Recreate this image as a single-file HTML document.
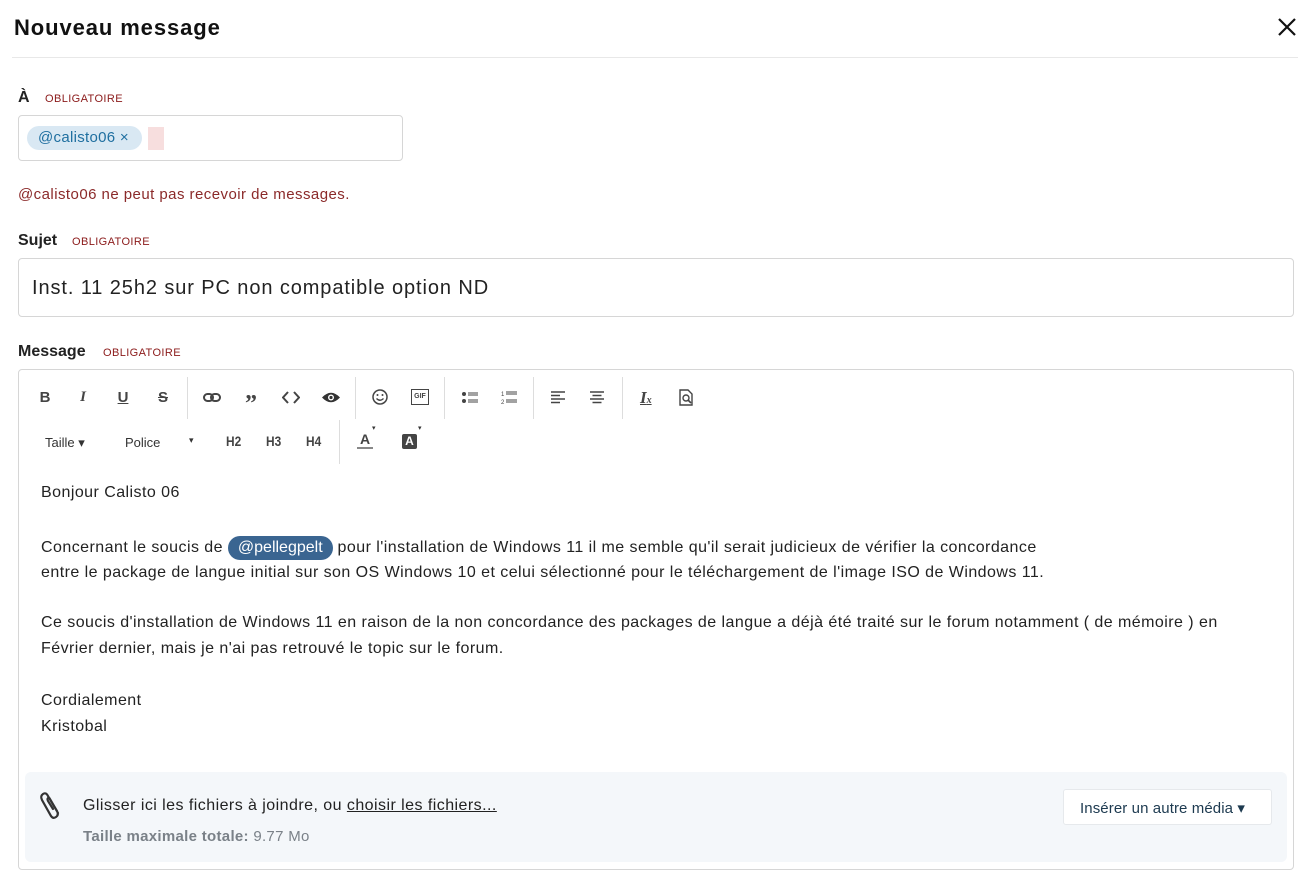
<!DOCTYPE html>
<html><head><meta charset="utf-8"><style>
*{box-sizing:border-box;margin:0;padding:0}
body{width:1307px;height:871px;background:#fff;font-family:"Liberation Sans",sans-serif;color:#141414;position:relative;overflow:hidden}
.a{position:absolute;white-space:nowrap}
.req{font-size:11px;color:#8b1a1a;letter-spacing:.4px}
.lbl{font-size:16px;font-weight:bold;color:#222}
.tb{position:absolute;font-size:15px;color:#444;font-weight:bold;text-align:center;width:30px}
.sep{position:absolute;width:1px;background:#ddd}
.txt{font-size:16px;color:#222;letter-spacing:.45px}
</style></head><body>
<div class="a" style="left:14px;top:15px;font-size:22px;font-weight:bold;color:#111;letter-spacing:.9px">Nouveau message</div>
<svg class="a" style="left:1278px;top:18px" width="18" height="18" viewBox="0 0 18 18"><path d="M1 1L17 17M17 1L1 17" stroke="#111" stroke-width="2.2"/></svg>
<div class="a" style="left:12px;top:57px;width:1286px;height:1px;background:#e8e8e8"></div>

<div class="a lbl" style="left:18px;top:89px">À</div>
<div class="a req" style="left:45px;top:93px">OBLIGATOIRE</div>
<div class="a" style="left:18px;top:115px;width:385px;height:46px;border:1px solid #d6d6d6;border-radius:4px"></div>
<div class="a" style="left:27px;top:126px;width:115px;height:24px;background:#d9e8f3;border-radius:12px;color:#1f6fa0;font-size:15px;padding:3px 0 0 11px;letter-spacing:.3px">@calisto06 ×</div>
<div class="a" style="left:148px;top:127px;width:16px;height:23px;background:#f7dede"></div>
<div class="a" style="left:18px;top:186px;font-size:15px;color:#8b2a2a;letter-spacing:.45px">@calisto06 ne peut pas recevoir de messages.</div>

<div class="a lbl" style="left:18px;top:232px">Sujet</div>
<div class="a req" style="left:72px;top:236px">OBLIGATOIRE</div>
<div class="a" style="left:18px;top:258px;width:1276px;height:59px;border:1px solid #d6d6d6;border-radius:4px"></div>
<div class="a" style="left:32px;top:277px;font-size:20px;color:#222;letter-spacing:.9px">Inst. 11 25h2 sur PC non compatible option ND</div>

<div class="a lbl" style="left:18px;top:343px">Message</div>
<div class="a req" style="left:103px;top:347px">OBLIGATOIRE</div>
<div class="a" style="left:18px;top:369px;width:1276px;height:501px;border:1px solid #d6d6d6;border-radius:4px"></div>

<div class="tb" style="left:30px;top:389px">B</div>
<div class="tb" style="left:68px;top:389px;font-style:italic;font-family:'Liberation Serif',serif">I</div>
<div class="tb" style="left:108px;top:389px;text-decoration:underline">U</div>
<div class="tb" style="left:148px;top:389px;text-decoration:line-through">S</div>
<div class="sep" style="left:187px;top:377px;height:42px"></div>
<svg class="a" style="left:203px;top:392px" width="18" height="12"><rect x="1" y="2" width="9" height="7" rx="3.5" fill="none" stroke="#444" stroke-width="2"/><rect x="8" y="2" width="9" height="7" rx="3.5" fill="none" stroke="#444" stroke-width="2"/></svg>
<div class="tb" style="left:236px;top:392px;font-size:24px;font-family:'Liberation Serif',serif;line-height:24px">”</div>
<svg class="a" style="left:282px;top:391px" width="18" height="13"><path d="M6 1L1 6.5L6 12M12 1L17 6.5L12 12" fill="none" stroke="#444" stroke-width="2"/></svg>
<svg class="a" style="left:321px;top:391px" width="20" height="13"><path d="M1 6.5Q10 -3 19 6.5Q10 16 1 6.5Z" fill="#333"/><circle cx="10" cy="6.5" r="3" fill="#fff"/><circle cx="10" cy="6.5" r="1.6" fill="#333"/></svg>
<div class="sep" style="left:355px;top:377px;height:42px"></div>
<svg class="a" style="left:372px;top:389px" width="16" height="16"><circle cx="8" cy="8" r="7" fill="none" stroke="#444" stroke-width="1.5"/><circle cx="5.5" cy="6" r="1" fill="#444"/><circle cx="10.5" cy="6" r="1" fill="#444"/><path d="M4.5 9.5Q8 13 11.5 9.5" fill="none" stroke="#444" stroke-width="1.3"/></svg>
<div class="a" style="left:411px;top:389px;width:18px;height:16px;border:1.5px solid #444;font-size:7px;font-weight:bold;text-align:center;line-height:13px;color:#444">GIF</div>
<div class="sep" style="left:444px;top:377px;height:42px"></div>
<svg class="a" style="left:462px;top:391px" width="16" height="13"><circle cx="2" cy="3" r="2" fill="#444"/><circle cx="2" cy="10" r="2" fill="#444"/><path d="M6 2h10M6 4h10M6 9h10M6 11h10" stroke="#444" stroke-width="1"/></svg>
<svg class="a" style="left:501px;top:390px" width="16" height="15"><text x="0" y="6" font-size="6" fill="#444" font-family="Liberation Sans">1</text><text x="0" y="14" font-size="6" fill="#444" font-family="Liberation Sans">2</text><path d="M5 2h11M5 4h11M5 10h11M5 12h11" stroke="#444" stroke-width="1"/></svg>
<div class="sep" style="left:533px;top:377px;height:42px"></div>
<svg class="a" style="left:551px;top:391px" width="14" height="13"><path d="M0 1h14M0 4.5h9M0 8h14M0 11.5h9" stroke="#444" stroke-width="1.6"/></svg>
<svg class="a" style="left:590px;top:391px" width="14" height="13"><path d="M0 1h14M2.5 4.5h9M0 8h14M2.5 11.5h9" stroke="#444" stroke-width="1.6"/></svg>
<div class="sep" style="left:622px;top:377px;height:42px"></div>
<div class="a" style="left:640px;top:388px;font-size:17px;font-style:italic;font-weight:bold;color:#444;text-decoration:underline;font-family:'Liberation Serif',serif">I<span style="font-size:10px;text-decoration:none">x</span></div>
<svg class="a" style="left:679px;top:389px" width="15" height="17"><path d="M1 1h8l4 4v11H1Z" fill="none" stroke="#444" stroke-width="1.4"/><circle cx="7" cy="9" r="3" fill="none" stroke="#444" stroke-width="1.4"/><path d="M9 11l3 3" stroke="#444" stroke-width="1.6"/></svg>

<div class="a" style="left:45px;top:435px;font-size:13px;color:#333">Taille ▾</div>
<div class="a" style="left:125px;top:435px;font-size:13px;color:#333">Police</div>
<div class="a" style="left:189px;top:435px;font-size:9px;color:#333">▾</div>
<div class="a" style="left:226px;top:433px;font-size:14px;font-weight:bold;color:#444;transform:scaleX(.85);transform-origin:left">H2</div>
<div class="a" style="left:266px;top:433px;font-size:14px;font-weight:bold;color:#444;transform:scaleX(.85);transform-origin:left">H3</div>
<div class="a" style="left:306px;top:433px;font-size:14px;font-weight:bold;color:#444;transform:scaleX(.85);transform-origin:left">H4</div>
<div class="sep" style="left:339px;top:420px;height:44px"></div>
<div class="a" style="left:357px;top:432px;font-size:14px;font-weight:bold;color:#444;border-bottom:2px solid #888;line-height:15px;width:16px;text-align:center">A</div>
<div class="a" style="left:372px;top:424px;font-size:7px;color:#333">▾</div>
<div class="a" style="left:402px;top:434px;width:15px;height:15px;background:#444;color:#fff;font-size:12px;font-weight:bold;text-align:center;line-height:15px;border-radius:2px">A</div>
<div class="a" style="left:418px;top:424px;font-size:7px;color:#333">▾</div>

<div class="a txt" style="left:41px;top:484px">Bonjour Calisto 06</div>
<div class="a txt" style="left:41px;top:536px">Concernant le soucis de <span style="display:inline-block;background:#3a6591;color:#fff;border-radius:13px;padding:3px 10px;margin:0;letter-spacing:0">@pellegpelt</span> pour l'installation de Windows 11 il me semble qu'il serait judicieux de vérifier la concordance</div>
<div class="a txt" style="left:41px;top:564px">entre le package de langue initial sur son OS Windows 10 et celui sélectionné pour le téléchargement de l'image ISO de Windows 11.</div>
<div class="a txt" style="left:41px;top:614px">Ce soucis d'installation de Windows 11 en raison de la non concordance des packages de langue a déjà été traité sur le forum notamment ( de mémoire ) en</div>
<div class="a txt" style="left:41px;top:640px">Février dernier, mais je n'ai pas retrouvé le topic sur le forum.</div>
<div class="a txt" style="left:41px;top:692px">Cordialement</div>
<div class="a txt" style="left:41px;top:718px">Kristobal</div>

<div class="a" style="left:25px;top:772px;width:1262px;height:90px;background:#f4f7fa;border-radius:6px"></div>
<svg class="a" style="left:38px;top:789px" width="28" height="32" viewBox="0 0 28 32"><path d="M20 24L10 7Q8 3 5 5Q2 7 4 11L13 27Q15 30 18 28Q21 26 19 22L12 10Q11 8 10 9Q9 10 10 12L15 20" fill="none" stroke="#333" stroke-width="2.2" stroke-linecap="round"/></svg>
<div class="a" style="left:83px;top:797px;font-size:16px;color:#222;letter-spacing:.45px">Glisser ici les fichiers à joindre, ou <span style="text-decoration:underline">choisir les fichiers...</span></div>
<div class="a" style="left:83px;top:828px;font-size:15px;color:#7a8188;letter-spacing:.3px"><b>Taille maximale totale:</b> 9.77 Mo</div>
<div class="a" style="left:1063px;top:789px;width:209px;height:36px;background:#fff;border:1px solid #e6e9ec;border-radius:3px;font-size:15px;color:#1d3a50;padding:9px 0 0 16px;letter-spacing:.1px">Insérer un autre média ▾</div>
</body></html>
